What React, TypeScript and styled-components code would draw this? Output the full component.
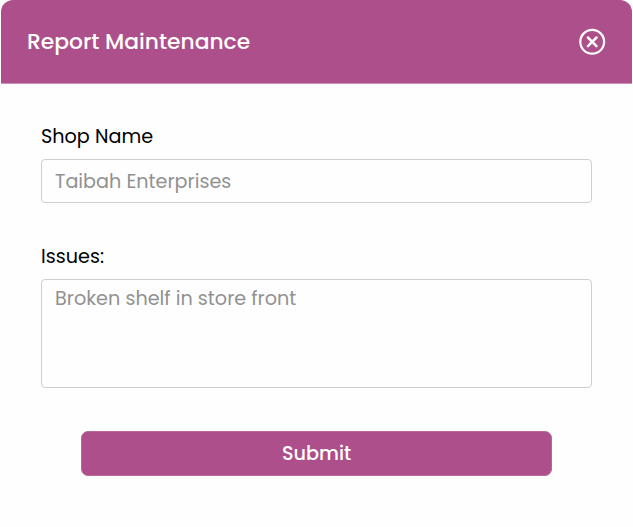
import React from 'react';
import styled, { createGlobalStyle } from 'styled-components';

const GlobalStyle = createGlobalStyle`
  * { box-sizing: border-box; }
  body { margin: 0; background: #fefefe; font-family: Poppins, Inter, sans-serif; }
`;

const Dialog = styled.section`
  width: 633px;
  height: 527px;
  padding: 0 1px;
  background: #fefefe;
`;

const Header = styled.header`
  height: 84px;
  padding: 0 26px;
  display: flex;
  align-items: center;
  justify-content: space-between;
  border-radius: 12px 12px 0 0;
  border-bottom: 1px solid #cc91b7;
  background: #ad4f8a;
`;

const Title = styled.h1`
  margin: 0;
  font-size: 21.8px;
  line-height: 32px;
  font-weight: 500;
  color: #fff;
`;

const CloseButton = styled.button`
  display: flex;
  padding: 0;
  border: 0;
  background: none;
  color: #fff;
`;

const Form = styled.form`
  display: flex;
  flex-direction: column;
  padding: 38px 40px 0;
`;

const Label = styled.label`
  height: 30px;
  margin-bottom: 7px;
  font-size: 19.2px;
  line-height: 30px;
  color: #000;
`;

const Control = styled.input<{ $height: number; $top: number }>`
  display: block;
  width: 551px;
  height: ${({ $height }) => $height}px;
  margin: 0;
  padding: ${({ $top }) => $top}px 13px 3px;
  border: 1px solid #cfcfcf;
  border-radius: 4px;
  outline: 0;
  background: #fefefe;
  color: #919191;
  font: 400 19.2px/30px Poppins, Inter, sans-serif;
  resize: none;
  overflow: hidden;
`;

const Field = styled.div`
  display: flex;
  flex-direction: column;
  margin-bottom: 39px;
`;

const SubmitButton = styled.button`
  align-self: center;
  width: 471px;
  height: 45px;
  margin-top: 4px;
  padding: 0;
  border: 1px solid #b76799;
  border-radius: 7px;
  background: #ad4f8a;
  color: #fff;
  font: 500 19.2px/30px Poppins, Inter, sans-serif;
`;

export default function App() {
  return (
    <>
      <GlobalStyle />
      <Dialog>
        <Header>
          <Title>Report Maintenance</Title>
          <CloseButton aria-label="Close">
            <svg width="27" height="27" viewBox="0 0 27 27" fill="none" stroke="currentColor" strokeLinecap="round">
              <circle cx="13.2" cy="13.8" r="11.9" strokeWidth="2.2" />
              <path d="M8.9 9.5l8.6 8.6M17.5 9.5l-8.6 8.6" strokeWidth="2.5" />
            </svg>
          </CloseButton>
        </Header>
        <Form>
          <Field>
            <Label htmlFor="shop">Shop Name</Label>
            <Control id="shop" $height={44} $top={3} defaultValue="Taibah Enterprises" />
          </Field>
          <Field>
            <Label htmlFor="issues">Issues:</Label>
            <Control as="textarea" id="issues" $height={109} $top={4} defaultValue="Broken shelf in store front" />
          </Field>
          <SubmitButton type="button">Submit</SubmitButton>
        </Form>
      </Dialog>
    </>
  );
}
